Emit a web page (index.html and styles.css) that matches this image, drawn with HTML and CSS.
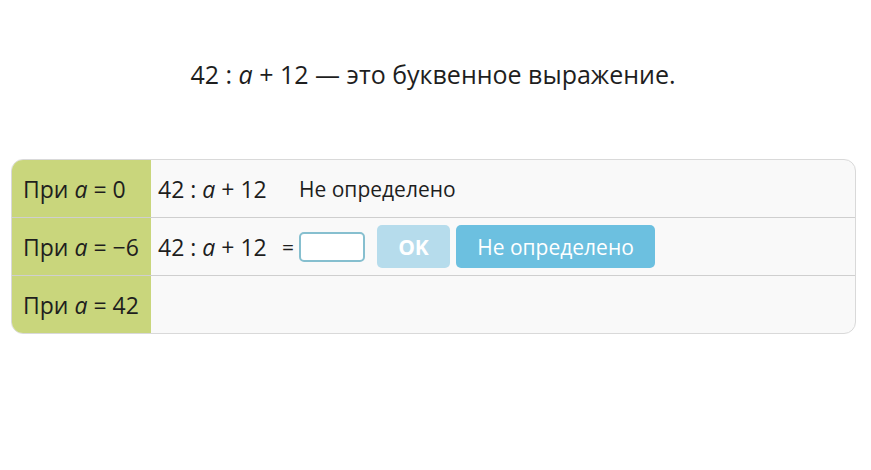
FILE: index.html
```html
<!DOCTYPE html>
<html lang="ru">
<head>
<meta charset="utf-8">
<link rel="stylesheet" href="styles.css">
</head>
<body>
<div class="page">
  <p class="title">42 : <i>a</i> + 12 — это буквенное выражение.</p>
  <div class="table">
    <div class="row">
      <div class="label"><span>При <i>a</i> = 0</span></div>
      <div class="cell">
        <span class="expr">42 : <i>a</i> + 12</span>
        <span class="answer">Не определено</span>
      </div>
    </div>
    <div class="row">
      <div class="label"><span>При <i>a</i> = −6</span></div>
      <div class="cell">
        <span class="expr">42 : <i>a</i> + 12</span>
        <span class="eq">=</span>
        <input class="inp" type="text">
        <button class="btn ok">OK</button>
        <button class="btn undef">Не определено</button>
      </div>
    </div>
    <div class="row">
      <div class="label"><span>При <i>a</i> = 42</span></div>
      <div class="cell"></div>
    </div>
  </div>
</div>
</body>
</html>
```

FILE: styles.css
```css
html, body {
  margin: 0;
  padding: 0;
  background: #ffffff;
}
body {
  font-family: "Open Sans", "Noto Sans", sans-serif;
  color: #1e1e1e;
}
.page {
  padding: 0 16px 0 11px;
}
.title {
  margin: 0;
  padding-top: 56px;
  height: 159px;
  box-sizing: border-box;
  text-align: center;
  font-size: 25px;
  line-height: 36px;
}
.table {
  border: 1px solid #d9d9d9;
  border-radius: 12px;
  overflow: hidden;
  background: #f9f9f9;
  width: 843px;
}
.row {
  display: flex;
  height: 57px;
  border-top: 1px solid #cfcfcf;
}
.row:first-child {
  border-top: none;
}
.label {
  width: 139px;
  background: #c9d67c;
  font-size: 23px;
  display: flex;
  align-items: center;
  padding-left: 11px;
  box-sizing: border-box;
}
.cell {
  flex: 1;
  display: flex;
  align-items: center;
  padding-left: 7px;
  font-size: 23px;
}
.expr {
  width: 124px;
  flex: none;
}
.answer {
  font-size: 21px;
  margin-left: 17px;
}
.eq {
  font-size: 21px;
  width: 17px;
}
.inp {
  width: 66px;
  height: 30px;
  box-sizing: border-box;
  border: 2px solid #86bfcf;
  border-radius: 5px;
  background: #fff;
  margin: 0 12px 0 0;
  padding: 0;
}
.btn {
  height: 43px;
  border: none;
  border-radius: 5px;
  color: #ffffff;
  font-family: "Open Sans", "Noto Sans", sans-serif;
  font-size: 21px;
  padding: 0;
}
.ok {
  width: 73px;
  background: #b6dcec;
  font-weight: 700;
  margin-right: 6px;
}
.undef {
  width: 199px;
  background: #6cc0e0;
}
```
